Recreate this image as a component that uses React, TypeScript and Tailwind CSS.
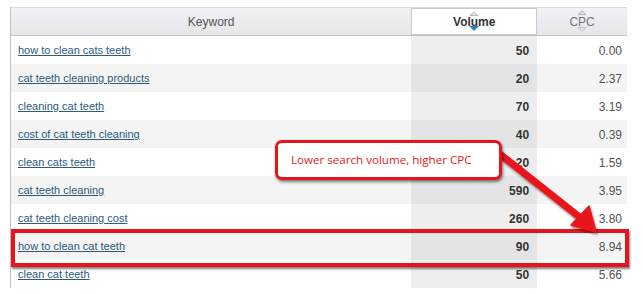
import React from 'react';

const rows = [
  { keyword: 'how to clean cats teeth', volume: 50, cpc: '0.00' },
  { keyword: 'cat teeth cleaning products', volume: 20, cpc: '2.37' },
  { keyword: 'cleaning cat teeth', volume: 70, cpc: '3.19' },
  { keyword: 'cost of cat teeth cleaning', volume: 40, cpc: '0.39' },
  { keyword: 'clean cats teeth', volume: 20, cpc: '1.59' },
  { keyword: 'cat teeth cleaning', volume: 590, cpc: '3.95' },
  { keyword: 'cat teeth cleaning cost', volume: 260, cpc: '3.80' },
  { keyword: 'how to clean cat teeth', volume: 90, cpc: '8.94' },
  { keyword: 'clean cat teeth', volume: 50, cpc: '5.66' },
];

function SortArrows({ active }: { active?: boolean }) {
  return (
    <>
      <svg className="absolute left-1/2 -translate-x-1/2 top-[2px]" width="9" height="5" viewBox="0 0 9 5">
        <path d="M0.5 4.5 L4.5 0.8 L8.5 4.5 Z" fill="#dfe1e4" stroke="#a8acb2" strokeWidth="0.8" />
      </svg>
      {active ? (
        <svg className="absolute left-1/2 -translate-x-1/2 bottom-[3px]" width="10" height="5" viewBox="0 0 10 5">
          <path d="M0 0 L10 0 L5 5 Z" fill="#2f80cc" />
        </svg>
      ) : (
        <svg className="absolute left-1/2 -translate-x-1/2 bottom-[3px]" width="9" height="5" viewBox="0 0 9 5">
          <path d="M0.5 0.5 L4.5 4.2 L8.5 0.5 Z" fill="#e4e6e9" stroke="#b8bcc1" strokeWidth="0.8" />
        </svg>
      )}
    </>
  );
}

export default function App() {
  return (
    <div className="relative w-[643px] h-[294px] bg-white overflow-hidden font-['Liberation_Sans',Arial,sans-serif] text-[11px]">
      <div className="ml-[10px] mt-[7px] w-[617px] border-l border-[#c4c4c4]">
        {/* Header */}
        <div className="flex h-[29px] border-t border-b border-t-[#d9dbde] border-b-[#c2c4c8] bg-gradient-to-b from-[#f2f3f5] to-[#e4e6ea] shadow-[0_1px_1px_rgba(0,0,0,0.12)]">
          <div className="w-[401px] flex items-center justify-center text-[#555] text-[12px]">Keyword</div>
          <div className="relative w-[126px] flex items-center justify-center bg-white border border-[#c9cbce] font-bold text-[#333] text-[12px]">
            Volume
            <SortArrows active />
          </div>
          <div className="relative w-[90px] flex items-center justify-center text-[#777] text-[12px]">
            CPC
            <SortArrows />
          </div>
        </div>

        {/* Rows */}
        {rows.map((r, i) => (
          <div key={r.keyword} className={`flex h-[28px] ${i % 2 === 1 ? 'bg-[#f4f4f4]' : 'bg-white'}`}>
            <div className="w-[401px] flex items-center pl-[7px] pt-[1px]">
              <a href="#" className="text-[#2c5b7b] underline">{r.keyword}</a>
            </div>
            <div className={`w-[126px] flex items-center justify-end pr-[8px] pt-[1px] font-bold text-[#333] text-[12px] ${i % 2 === 1 ? 'bg-[#e4e4e4]' : 'bg-[#eeeeee]'}`}>
              {r.volume}
            </div>
            <div className="w-[90px] flex items-center justify-end pr-[5px] pt-[1px] text-[#555] text-[12px]">{r.cpc}</div>
          </div>
        ))}
      </div>

      {/* Highlight box around row 8 */}
      <div className="absolute left-[11px] top-[229px] w-[618px] h-[38px] border-[4px] border-[#e8141b] shadow-[1px_2px_2px_rgba(0,0,0,0.5)] pointer-events-none" />

      {/* Arrow */}
      <svg className="absolute left-0 top-0 pointer-events-none" width="643" height="294" viewBox="0 0 643 294">
        <defs>
          <filter id="sh" x="-20%" y="-20%" width="140%" height="140%">
            <feDropShadow dx="1" dy="2" stdDeviation="1" floodColor="#000" floodOpacity="0.5" />
          </filter>
        </defs>
        <g filter="url(#sh)">
          <line x1="496" y1="151" x2="582" y2="219" stroke="#e8141b" strokeWidth="7" strokeLinecap="round" />
          <path d="M596 232 L571 225 L589 206 Z" fill="#e8141b" stroke="#e8141b" strokeWidth="1.5" strokeLinejoin="round" />
        </g>
      </svg>

      {/* Callout */}
      <div className="absolute left-[275px] top-[140px] w-[227px] h-[40px] rounded-[7px] border-[3px] border-[#e8141b] bg-white shadow-[1px_2px_3px_rgba(0,0,0,0.5)] flex items-center pl-[13px] font-['Open_Sans',sans-serif] text-[11.6px] text-[#e01a22]">
        Lower search volume, higher CPC
      </div>
    </div>
  );
}
